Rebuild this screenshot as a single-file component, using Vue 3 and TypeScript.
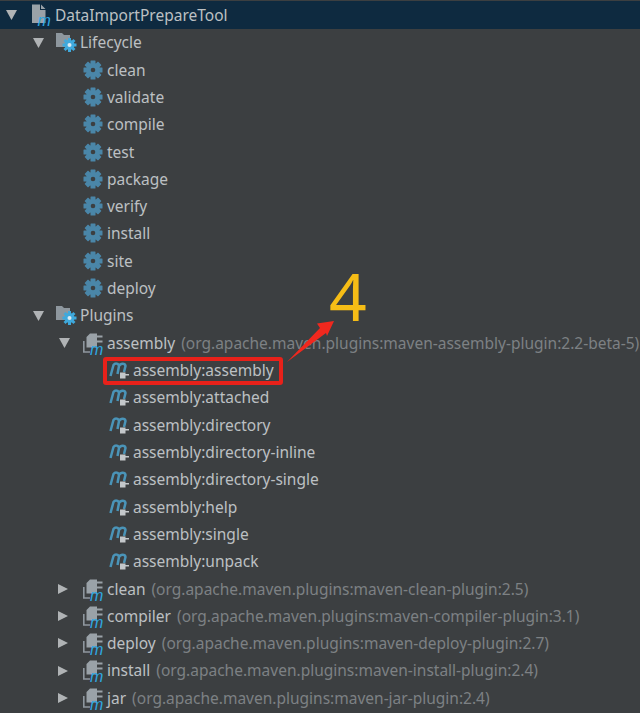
<script setup lang="ts">
type Kind = 'project' | 'folder' | 'gear' | 'plugin' | 'goal'
interface Row { label: string; hint?: string; kind: Kind; depth: number; arrow?: 'down' | 'right'; head?: boolean }
const phases = ['clean', 'validate', 'compile', 'test', 'package', 'verify', 'install', 'site', 'deploy']
const goals = ['assembly', 'attached', 'directory', 'directory-inline', 'directory-single', 'help', 'single', 'unpack']
const plugins: [string, string][] = [
  ['clean', 'maven-clean-plugin:2.5'],
  ['compiler', 'maven-compiler-plugin:3.1'],
  ['deploy', 'maven-deploy-plugin:2.7'],
  ['install', 'maven-install-plugin:2.4'],
  ['jar', 'maven-jar-plugin:2.4'],
]
const rows: Row[] = [
  { label: 'DataImportPrepareTool', kind: 'project', depth: 0, arrow: 'down', head: true },
  { label: 'Lifecycle', kind: 'folder', depth: 1, arrow: 'down' },
  ...phases.map((label): Row => ({ label, kind: 'gear', depth: 2 })),
  { label: 'Plugins', kind: 'folder', depth: 1, arrow: 'down' },
  { label: 'assembly', hint: '(org.apache.maven.plugins:maven-assembly-plugin:2.2-beta-5)', kind: 'plugin', depth: 2, arrow: 'down' },
  ...goals.map((g): Row => ({ label: 'assembly:' + g, kind: 'goal', depth: 3 })),
  ...plugins.map(([label, p]): Row => ({ label, hint: `(org.apache.maven.plugins:${p})`, kind: 'plugin', depth: 2, arrow: 'right' })),
]
const teeth = [0, 45, 90, 135]
</script>

<template>
  <div class="tree">
    <div v-for="(r, i) in rows" :key="i" class="row" :class="[r.kind, { head: r.head }]">
      <svg v-if="r.arrow" class="arrow" width="14" height="16" viewBox="0 0 14 16">
        <path v-if="r.arrow === 'down'" d="M2 3H13L7.5 13Z" fill="#b0b3b5" />
        <path v-else d="M1 3V13L11 8Z" fill="#b0b3b5" />
      </svg>

      <svg v-if="r.kind === 'project'" class="icon" width="26" height="26" viewBox="0 0 26 26">
        <path d="M2 2.5H10V8H15.5V21H2Z M11 2.5L15.5 7H11Z" fill="#9aa2a8" />
        <text x="7.5" y="24" class="m">m</text>
      </svg>
      <svg v-else-if="r.kind === 'folder'" class="icon" width="22" height="22" viewBox="0 0 22 22">
        <path d="M0 2H6L8 4H14V16H0Z" fill="#8e979e" />
        <g fill="#3fa9dc">
          <rect v-for="t in teeth" :key="t" x="12" y="7" width="3" height="14" :transform="`rotate(${t} 13.5 14)`" />
          <circle cx="13.5" cy="14" r="5" />
        </g>
        <circle cx="13.5" cy="14" r="2" fill="#dbeaf2" />
      </svg>
      <svg v-else-if="r.kind === 'gear'" class="icon" width="20" height="20" viewBox="0 0 20 20">
        <g fill="#4a86a8">
          <rect v-for="t in teeth" :key="t" x="7.5" y="0.5" width="5" height="19" rx="0.5" :transform="`rotate(${t} 10 10)`" />
          <circle cx="10" cy="10" r="7" />
        </g>
        <circle cx="10" cy="10" r="2.3" fill="#3c3f41" />
      </svg>
      <svg v-else-if="r.kind === 'plugin'" class="icon" width="24" height="24" viewBox="0 0 24 24">
        <path d="M1.8 10V21H8" fill="none" stroke="#8e979e" stroke-width="1.6" />
        <path d="M4.5 6L8 2.5H15V4.5H20.5V6.5H15V9.5H20.5V11.5H15V16.5H4.5Z" fill="#9aa2a8" />
        <text x="8" y="23.5" class="m">m</text>
      </svg>
      <svg v-else-if="r.kind === 'goal'" class="icon" width="22" height="20" viewBox="0 0 22 20">
        <path d="M1.5 16L4.5 5C6 3 9.5 3 10 6L8.5 14M10 6C11.5 3 16 3 16.5 6L15 12" fill="none" stroke="#4a94b8" stroke-width="2.5" />
        <path d="M11 12.5H16.5V14H20V15.5H16.5V18.5H11Z" fill="#c3c7ca" />
      </svg>

      <span class="label">{{ r.label }}</span>
      <span v-if="r.hint" class="hint">{{ r.hint }}</span>
    </div>

    <div class="callout-box"></div>
    <svg class="callout-arrow" width="60" height="50" viewBox="0 0 60 50">
      <path d="M7 47L40 13L37 8.5L54 6L47 21L46 18Z" fill="#f0281e" />
    </svg>
    <span class="callout-num">4</span>
  </div>
</template>

<style>
html, body { margin: 0; background: #3c3f41; }
</style>

<style scoped>
.tree {
  position: relative;
  width: 640px;
  height: 713px;
  overflow: hidden;
  background: #3c3f41;
  padding-top: 1.3px;
  box-sizing: border-box;
  font-family: "Noto Sans", "Open Sans", sans-serif;
  font-size: 15.5px;
  color: #bcc0c3;
}
.row {
  position: relative;
  display: flex;
  align-items: center;
  height: 27.32px;
  white-space: nowrap;
}
.head {
  background: #0e2a40;
}
.icon { flex: none; overflow: visible; }
.project { padding-left: 30px; }
.project .label { margin-left: -1px; }
.folder { padding-left: 56px; }
.folder .label { margin-left: 2px; }
.gear { padding-left: 83px; }
.gear .label { margin-left: 4px; }
.plugin { padding-left: 82px; }
.plugin .label { margin-left: 1px; }
.goal { padding-left: 109px; }
.goal .label { margin-left: 2px; }
.arrow { position: absolute; top: 6px; }
.head .arrow { left: 4px; }
.folder .arrow { left: 31px; }
.plugin .arrow { left: 57px; }
.hint {
  margin-left: 6px;
  color: #7d8184;
}
.m {
  font-family: "Liberation Sans", sans-serif;
  font-size: 16px;
  font-style: italic;
  fill: #2fa7e0;
}
.callout-box {
  position: absolute;
  left: 103px;
  top: 357px;
  width: 172px;
  height: 20px;
  border: 4px solid #e8211a;
  border-radius: 3px;
}
.callout-arrow {
  position: absolute;
  left: 280px;
  top: 315px;
}
.callout-num {
  position: absolute;
  left: 329px;
  top: 267px;
  font-family: "Noto Sans", sans-serif;
  font-size: 66px;
  line-height: 56px;
  color: #f6bd16;
}
</style>
